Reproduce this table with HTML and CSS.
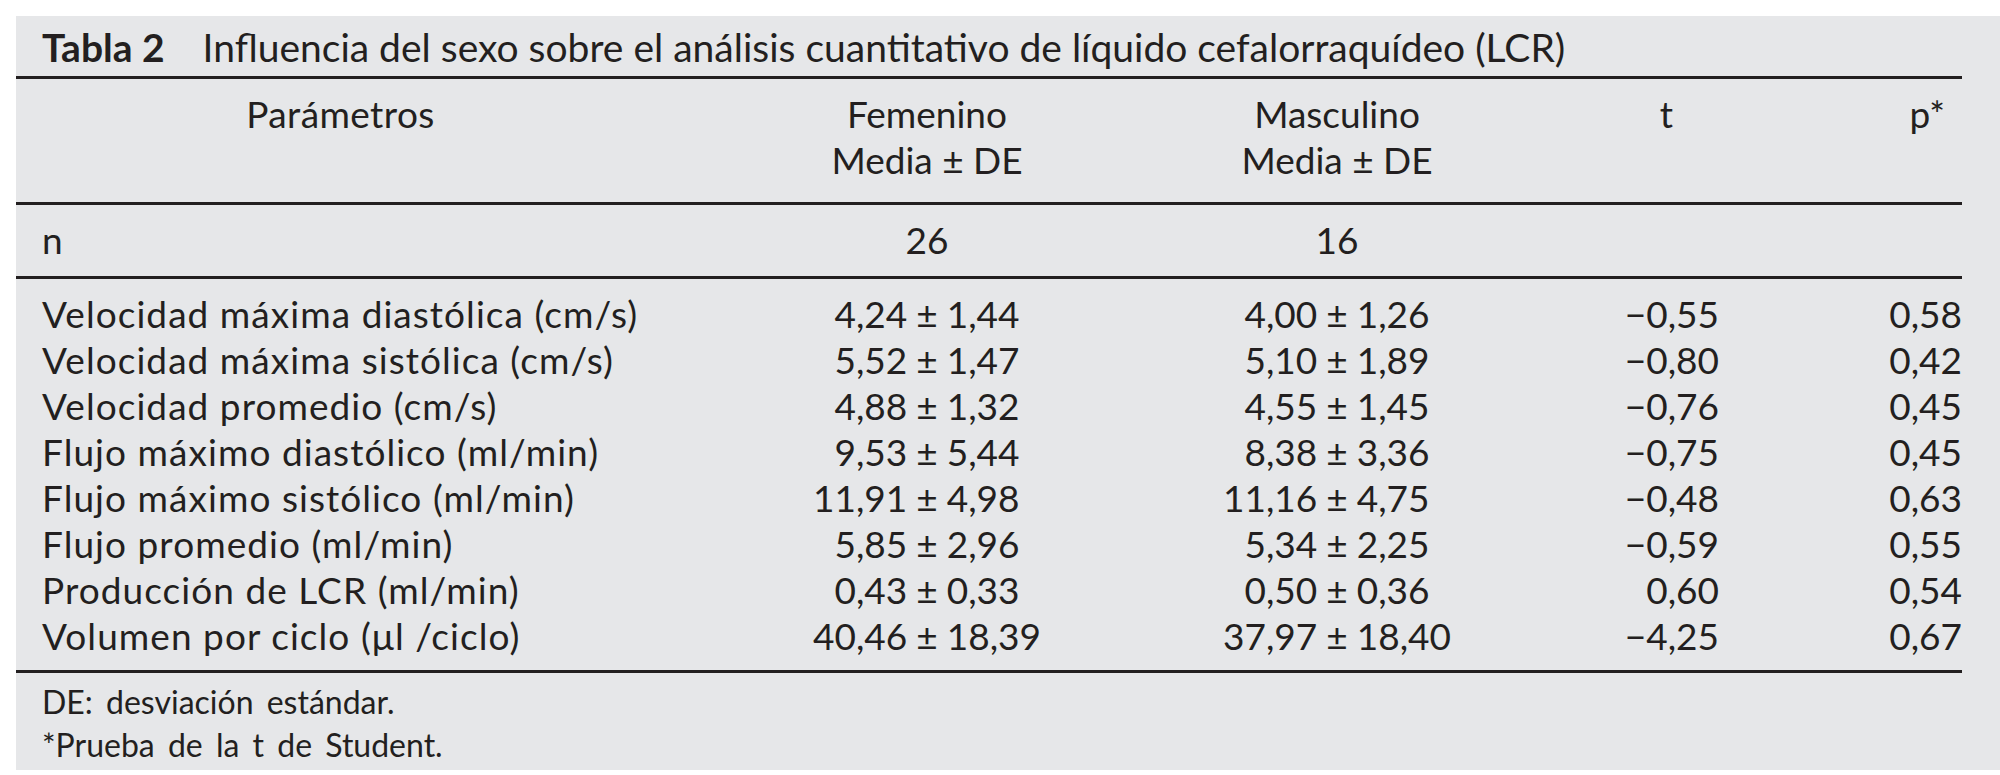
FILE: index.html
```html
<!DOCTYPE html>
<html lang="es">
<head>
<meta charset="utf-8">
<title>Tabla 2</title>
<link rel="stylesheet" href="styles.css">
</head>
<body>
<div class="panel">
  <div class="title"><span class="tnum">Tabla 2</span><span class="ttext">Influencia del sexo sobre el análisis cuantitativo de líquido cefalorraquídeo (LCR)</span></div>
  <div class="grid head">
    <div class="c1 hparam">Parámetros</div>
    <div class="c2">Femenino<br>Media ± DE</div>
    <div class="c3">Masculino<br>Media ± DE</div>
    <div class="c4 ht">t</div>
    <div class="c5 hp">p*</div>
  </div>
  <div class="grid nrow">
    <div class="c1">n</div>
    <div class="c2">26</div>
    <div class="c3">16</div>
    <div class="c4"></div>
    <div class="c5"></div>
  </div>
  <div class="grid body">
    <div class="c1 lbl">Velocidad máxima diastólica (cm/s)</div>
    <div class="c2 pm"><span class="a">4,24</span><span class="s">±</span><span class="b">1,44</span></div>
    <div class="c3 pm"><span class="a">4,00</span><span class="s">±</span><span class="b">1,26</span></div>
    <div class="c4">−0,55</div>
    <div class="c5">0,58</div>

    <div class="c1 lbl">Velocidad máxima sistólica (cm/s)</div>
    <div class="c2 pm"><span class="a">5,52</span><span class="s">±</span><span class="b">1,47</span></div>
    <div class="c3 pm"><span class="a">5,10</span><span class="s">±</span><span class="b">1,89</span></div>
    <div class="c4">−0,80</div>
    <div class="c5">0,42</div>

    <div class="c1 lbl">Velocidad promedio (cm/s)</div>
    <div class="c2 pm"><span class="a">4,88</span><span class="s">±</span><span class="b">1,32</span></div>
    <div class="c3 pm"><span class="a">4,55</span><span class="s">±</span><span class="b">1,45</span></div>
    <div class="c4">−0,76</div>
    <div class="c5">0,45</div>

    <div class="c1 lbl">Flujo máximo diastólico (ml/min)</div>
    <div class="c2 pm"><span class="a">9,53</span><span class="s">±</span><span class="b">5,44</span></div>
    <div class="c3 pm"><span class="a">8,38</span><span class="s">±</span><span class="b">3,36</span></div>
    <div class="c4">−0,75</div>
    <div class="c5">0,45</div>

    <div class="c1 lbl">Flujo máximo sistólico (ml/min)</div>
    <div class="c2 pm"><span class="a">11,91</span><span class="s">±</span><span class="b">4,98</span></div>
    <div class="c3 pm"><span class="a">11,16</span><span class="s">±</span><span class="b">4,75</span></div>
    <div class="c4">−0,48</div>
    <div class="c5">0,63</div>

    <div class="c1 lbl">Flujo promedio (ml/min)</div>
    <div class="c2 pm"><span class="a">5,85</span><span class="s">±</span><span class="b">2,96</span></div>
    <div class="c3 pm"><span class="a">5,34</span><span class="s">±</span><span class="b">2,25</span></div>
    <div class="c4">−0,59</div>
    <div class="c5">0,55</div>

    <div class="c1 lbl">Producción de LCR (ml/min)</div>
    <div class="c2 pm"><span class="a">0,43</span><span class="s">±</span><span class="b">0,33</span></div>
    <div class="c3 pm"><span class="a">0,50</span><span class="s">±</span><span class="b">0,36</span></div>
    <div class="c4">0,60</div>
    <div class="c5">0,54</div>

    <div class="c1 lbl">Volumen por ciclo (μl /ciclo)</div>
    <div class="c2 pm"><span class="a">40,46</span><span class="s">±</span><span class="b">18,39</span></div>
    <div class="c3 pm"><span class="a">37,97</span><span class="s">±</span><span class="b">18,40</span></div>
    <div class="c4">−4,25</div>
    <div class="c5">0,67</div>
  </div>
  <div class="notes">
    <div>DE: desviación estándar.</div>
    <div>*Prueba de la t de Student.</div>
  </div>
</div>
</body>
</html>
```

FILE: styles.css
```css
html, body {
  margin: 0;
  padding: 0;
  background: #ffffff;
}

body {
  font-family: "Lato", "DejaVu Sans", sans-serif;
  color: #231f20;
}

.panel {
  margin: 16px 0 0 16px;
  background: #e6e7e9;
  padding: 0 38px 4px 0;
  height: 754px;
  box-sizing: border-box;
}

.title {
  font-size: 39px;
  line-height: 46px;
  padding: 8px 0 6px 26px;
  border-bottom: 3px solid #231f20;
  white-space: nowrap;
}

.tnum {
  font-weight: 700;
  margin-right: 38px;
}

.grid {
  display: grid;
  grid-template-columns: 685px 400px 420px 172px 243px;
  font-size: 37px;
  line-height: 46px;
  padding-left: 26px;
  white-space: nowrap;
}

.head {
  padding-top: 12px;
  padding-bottom: 19px;
  border-bottom: 3px solid #231f20;
}

.nrow {
  padding-top: 12px;
  padding-bottom: 13px;
  border-bottom: 3px solid #231f20;
}

.body {
  padding-top: 12px;
  padding-bottom: 11px;
  border-bottom: 3px solid #231f20;
}

.c1 { text-align: left; }
.c2, .c3 { text-align: center; }
.c4, .c5 { text-align: right; }

.lbl {
  letter-spacing: 1.05px;
}

.hparam {
  text-align: center;
  padding-right: 88px;
  letter-spacing: 0.4px;
}

.ht { padding-right: 46px; }
.hp { padding-right: 17px; }

.pm {
  display: flex;
}

.pm .a {
  flex: 1;
  text-align: right;
}

.pm .b {
  flex: 1;
  text-align: left;
}

.pm .s {
  padding: 0 9px;
}

.notes {
  font-size: 32px;
  line-height: 43px;
  padding: 7px 0 0 26px;
  word-spacing: 5px;
}
```
